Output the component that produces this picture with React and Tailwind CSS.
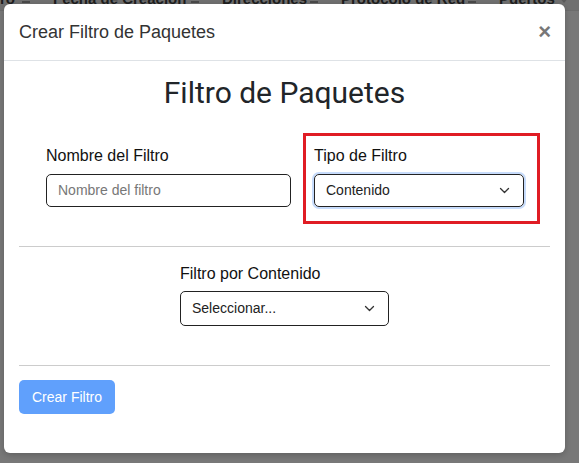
import React from "react";

const Chevron = () => (
  <svg width="11" height="7" viewBox="0 0 11 7" className="shrink-0">
    <polyline points="1.5,1.5 5.5,5.5 9.5,1.5" fill="none" stroke="#333" strokeWidth="1.3" strokeLinecap="round" strokeLinejoin="round" />
  </svg>
);

const SortIcon = () => (
  <span className="flex flex-col items-center gap-[2px]">
    <span className="h-[2px] w-[8px] bg-[#4a4a4a]" />
    <span className="h-[2px] w-[8px] bg-[#4a4a4a]" />
  </span>
);

export default function App() {
  const columnas = [
    { titulo: "ro", ancho: "w-[40px]" },
    { titulo: "Fecha de Creación", ancho: "w-[169px]" },
    { titulo: "Direcciones", ancho: "w-[119px]" },
    { titulo: "Protocolo de Red", ancho: "w-[158px]" },
    { titulo: "Puertos", ancho: "w-[93px]" },
  ];

  return (
    <div className="relative h-[463px] w-[579px] overflow-hidden bg-[#787878] font-['Liberation_Sans',Arial,sans-serif]">
      {/* tabla de fondo, atenuada por el modal */}
      <div className="-mt-[11px] flex h-[22px] items-center border-b border-[#6c6c6c] bg-[#707070]">
        {columnas.map((c, i) => (
          <div key={i} className={`${c.ancho} flex shrink-0 items-center justify-between pr-[10px] ${i === 0 ? "pl-0" : "pl-[13px]"}`}>
            <span className="text-[15px] font-bold text-[#1e1e1e]">{c.titulo}</span>
            {i < columnas.length - 1 ? (
              <SortIcon />
            ) : (
              <span className="h-0 w-0 border-x-[5px] border-t-[6px] border-x-transparent border-t-[#5a5a5a]" />
            )}
          </div>
        ))}
      </div>

      {/* modal */}
      <div className="absolute left-[4px] top-[4px] w-[561px] rounded-[6px] bg-white shadow-[0_2px_6px_rgba(0,0,0,0.2)]">
        <div className="flex h-[57px] items-center justify-between border-b border-[#dee2e6] pl-[15px] pr-[14px]">
          <h1 className="text-[18px] text-[#333]">Crear Filtro de Paquetes</h1>
          <span className="text-[22px] font-bold leading-none text-[#777]">×</span>
        </div>

        <div className="px-[15px] pt-[14px]">
          <h2 className="text-center font-['Roboto',sans-serif] text-[30px] leading-[36px] text-[#212529]">
            Filtro de Paquetes
          </h2>

          <div className="mt-[22px] flex items-start pl-[27px]">
            <div className="w-[245px] pt-[14px]">
              <label className="block text-[16px] leading-[18px] text-[#111]">Nombre del Filtro</label>
              <div className="mt-[9px] flex h-[33px] items-center rounded-[5px] border border-[#222] px-[11px]">
                <span className="text-[14px] text-[#777]">Nombre del filtro</span>
              </div>
            </div>

            <div className="ml-[12px] w-[237px] border-[3px] border-[#e01c24] pb-[14px] pl-[8px] pr-[13px] pt-[11px]">
              <label className="block text-[16px] leading-[18px] text-[#111]">Tipo de Filtro</label>
              <div className="mt-[9px] flex h-[33px] items-center justify-between rounded-[5px] border border-[#222] pl-[11px] pr-[13px] ring-2 ring-[#c6dbfb]">
                <span className="text-[14px] text-[#222]">Contenido</span>
                <Chevron />
              </div>
            </div>
          </div>

          <div className="mt-[22px] border-t border-[#ccc]" />

          <div className="mx-auto mt-[18px] w-[209px]">
            <label className="block text-[16px] leading-[18px] text-[#111]">Filtro por Contenido</label>
            <div className="mt-[8px] flex h-[35px] items-center justify-between rounded-[5px] border border-[#222] pl-[11px] pr-[13px]">
              <span className="text-[14px] text-[#222]">Seleccionar...</span>
              <Chevron />
            </div>
          </div>

          <div className="mt-[39px] border-t border-[#ccc]" />

          <div className="pb-[39px] pt-[14px]">
            <button className="h-[34px] w-[96px] rounded-[5px] bg-[#60a0fc] text-[14px] text-white">
              Crear Filtro
            </button>
          </div>
        </div>
      </div>
    </div>
  );
}
